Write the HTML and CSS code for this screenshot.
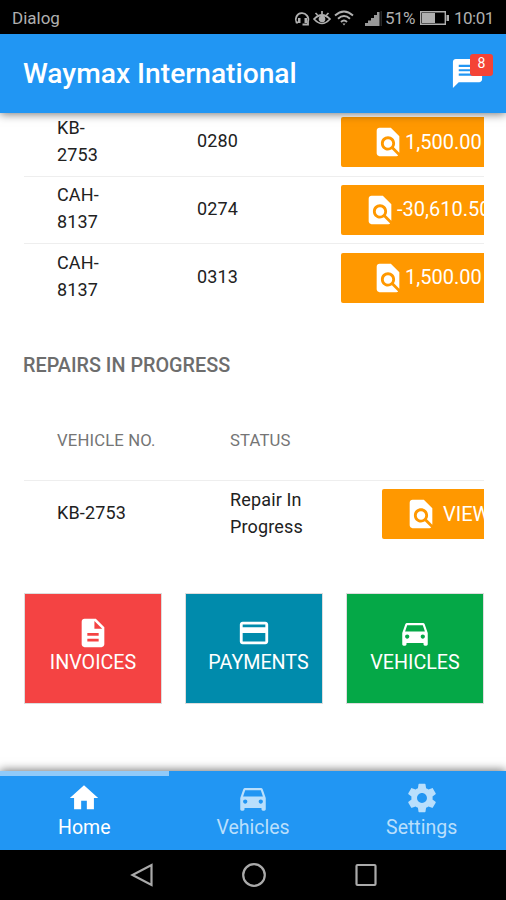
FILE: index.html
```html
<!DOCTYPE html>
<html lang="en">
<head>
<meta charset="utf-8">
<title>Waymax International</title>
<link rel="stylesheet" href="styles.css">
</head>
<body>
<svg class="defs" width="0" height="0">
  <symbol id="find" viewBox="0 0 24 24"><path d="M20 19.59V8l-6-6H6c-1.100 0-1.990.9-1.990 2L4 20c0 1.100.89 2 1.990 2H18c.45 0 .85-.15 1.190-.4l-4.430-4.430c-.8.52-1.740.83-2.760.83-2.760 0-5-2.240-5-5s2.240-5 5-5 5 2.240 5 5c0 1.020-.31 1.960-.83 2.750L20 19.590zM9 13c0 1.660 1.340 3 3 3s3-1.340 3-3-1.340-3-3-3-3 1.340-3 3z"/></symbol>
  <symbol id="car" viewBox="0 0 24 24"><path d="M18.920 6.010C18.720 5.420 18.160 5 17.500 5h-11c-.66 0-1.210.42-1.420 1.010L3 12v8c0 .55.45 1 1 1h1c.55 0 1-.45 1-1v-1h12v1c0 .55.45 1 1 1h1c.55 0 1-.45 1-1v-8l-2.080-5.990zM6.500 16c-.83 0-1.500-.67-1.500-1.500S5.670 13 6.500 13s1.500.67 1.500 1.500S7.330 16 6.500 16zm11 0c-.83 0-1.500-.67-1.500-1.500s.67-1.500 1.500-1.500 1.500.67 1.500 1.500-.67 1.500-1.500 1.500zM5 11l1.500-4.500h11L19 11H5z"/></symbol>
</svg>
<div class="phone">
  <div class="status">
    <span class="carrier">Dialog</span>
    <div class="indicators">
      <svg class="headset" width="18" height="16" viewBox="0 0 18 16"><path d="M5 12.500H3.500A6.300 6.300 0 1 1 15 11.500V14.500H9.500" fill="none" stroke="currentColor" stroke-width="1.800"/><path d="M5 8h2.500v5H5zM11.500 8H14v5h-2.500z" fill="currentColor"/></svg>
      <svg class="eye" width="18" height="16" viewBox="0 0 18 16" fill="none" stroke="currentColor" stroke-width="1.700"><path d="M1 9q8-8 16 0-8 9-16 0zM2.500 3l2 2M9 1v3M15.500 3l-2 2"/><circle cx="9" cy="9" r="2.500" fill="currentColor"/></svg>
      <svg class="wifi" width="20" height="16" viewBox="0 0 20 16" fill="none" stroke="currentColor" stroke-width="1.900"><path d="M1 5.500q9-8 18 0M4 8.800q6-5.500 12 0M7 12q3-3 6 0"/><path d="M8.500 13.500h3L10 15.500z" fill="currentColor" stroke="none"/></svg>
      <svg class="signal" width="17" height="15" viewBox="0 0 17 15"><path d="M0 15v-3h3V9.500h3V7h3V4h3V1h2.500v14z" fill="#999"/><path d="M15.500 0H17v15h-1.500z" fill="#292929"/></svg>
      <span class="percent">51%</span>
      <svg class="battery" width="29" height="14" viewBox="0 0 29 14"><path d="M.7.700h24.600v12.600H.7z" fill="none" stroke="currentColor" stroke-width="1.400"/><path d="M2 2h13v10H2zM26.500 4H29v6h-2.500z" fill="currentColor"/></svg>
      <span class="clock">10:01</span>
    </div>
  </div>
  <header class="header">
    <h1>Waymax International</h1>
    <div class="messages">
      <svg width="35" height="35" viewBox="0 0 24 24" fill="#fff"><path d="M20 2H4c-1.100 0-1.990.9-1.990 2L2 22l4-4h14c1.100 0 2-.9 2-2V4c0-1.100-.9-2-2-2z"/><path d="M6 6h12v1.500H6zM6 9h12v1.500H6zM6 12h12v1.500H6z" fill="#2196f3"/></svg>
      <span class="badge">8</span>
    </div>
  </header>
  <main class="content">
    <div class="invoices">
      <div class="row"><span>KB-<br>2753</span><span>0280</span><div class="button"><svg class="icon"><use href="#find"/></svg>1,500.00</div></div>
      <div class="row"><span>CAH-<br>8137</span><span>0274</span><div class="button wide"><svg class="icon"><use href="#find"/></svg>-30,610.50</div></div>
      <div class="row"><span>CAH-<br>8137</span><span>0313</span><div class="button"><svg class="icon"><use href="#find"/></svg>1,500.00</div></div>
    </div>
    <h2>REPAIRS IN PROGRESS</h2>
    <div class="repairs">
      <div class="row head"><span>VEHICLE NO.</span><span>STATUS</span></div>
      <div class="row"><span>KB-2753</span><span>Repair In<br>Progress</span><div class="button view"><svg class="icon"><use href="#find"/></svg>VIEW</div></div>
    </div>
    <div class="tiles">
      <div class="tile red"><svg class="icon" viewBox="0 0 24 24"><path d="M14 2H6c-1.100 0-1.990.9-1.990 2L4 20c0 1.100.89 2 1.990 2H18c1.100 0 2-.9 2-2V8l-6-6zm2 16H8v-2h8v2zm0-4H8v-2h8v2zm-3-5V3.500L18.500 9H13z"/></svg><span>INVOICES</span></div>
      <div class="tile teal"><svg class="icon" viewBox="0 0 24 24"><path d="M20 4H4c-1.110 0-1.990.89-1.990 2L2 18c0 1.110.89 2 2 2h16c1.110 0 2-.89 2-2V6c0-1.110-.89-2-2-2zm0 14H4v-6h16v6zm0-10H4V6h16v2z"/></svg><span>PAYMENTS</span></div>
      <div class="tile green"><svg class="icon"><use href="#car"/></svg><span>VEHICLES</span></div>
    </div>
  </main>
  <nav class="tabs">
    <div class="tab active"><svg class="icon" viewBox="0 0 24 24"><path d="M10 20v-6h4v6h5v-8h3L12 3 2 12h3v8z"/></svg><span>Home</span></div>
    <div class="tab"><svg class="icon"><use href="#car"/></svg><span>Vehicles</span></div>
    <div class="tab"><svg class="icon" viewBox="0 0 24 24"><path d="M19.430 12.980c.04-.32.07-.64.07-.98s-.03-.66-.07-.98l2.110-1.650c.19-.15.24-.42.12-.64l-2-3.460c-.12-.22-.39-.3-.61-.22l-2.490 1c-.52-.4-1.080-.73-1.690-.98l-.38-2.650C14.460 2.180 14.250 2 14 2h-4c-.25 0-.46.18-.49.42l-.38 2.650c-.61.25-1.170.59-1.690.98l-2.490-1c-.23-.09-.49 0-.61.22l-2 3.460c-.13.22-.07.49.12.64l2.110 1.650c-.04.32-.07.65-.07.98s.03.66.07.98l-2.110 1.650c-.19.15-.24.42-.12.64l2 3.460c.12.22.39.3.61.22l2.490-1c.52.4 1.080.73 1.690.98l.38 2.650c.03.24.24.42.49.42h4c.25 0 .46-.18.49-.42l.38-2.650c.61-.25 1.170-.59 1.690-.98l2.490 1c.23.09.49 0 .61-.22l2-3.460c.12-.22.07-.49-.12-.64l-2.110-1.650zM12 15.500c-1.930 0-3.500-1.570-3.500-3.500s1.570-3.500 3.500-3.500 3.500 1.570 3.500 3.500-1.570 3.500-3.500 3.500z"/></svg><span>Settings</span></div>
  </nav>
  <div class="system">
    <svg width="24" height="26" viewBox="0 0 24 26"><path d="M21.500 3v20L2.500 13z"/></svg>
    <svg width="26" height="26" viewBox="0 0 26 26"><circle cx="13" cy="13" r="10.800"/></svg>
    <svg width="24" height="26" viewBox="0 0 24 26"><rect x="2.500" y="3" width="19" height="20" rx="1"/></svg>
  </div>
</div>
</body>
</html>
```

FILE: styles.css
```css
* { box-sizing: border-box; }
body { margin: 0; background: #fff; font-family: Roboto, sans-serif; }
.defs { display: block; }
.phone { width: 506px; height: 900px; display: flex; flex-direction: column; overflow: hidden; }
.phone svg { display: block; flex: none; }
.icon { width: 34px; height: 34px; fill: currentColor; }

.status { flex: none; height: 34px; background: #000; color: #b0b0b0; display: flex; justify-content: space-between; align-items: center; padding: 2px 12px 0 12px; font-size: 17px; }
.carrier { letter-spacing: 0; }
.indicators { display: flex; align-items: center; }
.eye { margin-left: 2px; }
.wifi { margin-left: 3px; }
.signal { margin-left: 11px; }
.percent { margin-left: 3px; width: 30px; letter-spacing: -.5px; }
.battery { margin-left: 5px; }
.clock { margin-left: 5px; width: 40px; letter-spacing: -.5px; }

.header { flex: none; height: 79px; background: #2196f3; color: #fff; display: flex; justify-content: space-between; align-items: center; padding: 0 18px 0 23px; box-shadow: 0 1px 9px rgba(0,0,0,.55); position: relative; z-index: 1; }
h1 { margin: 0; font-size: 28.200px; font-weight: 500; }
.messages { position: relative; width: 38px; height: 35px; }
.badge { position: absolute; left: 20px; top: -2px; width: 23px; height: 22px; border-radius: 3px; background: #f44336; font-size: 14px; line-height: 19px; text-align: center; }

.content { flex: 1; min-height: 0; overflow: hidden; padding: 0 22px 0 24px; font-size: 18px; color: #212121; }
.invoices { margin-top: -4px; }
.row { display: grid; align-items: center; line-height: 27px; overflow: hidden; }
.invoices .row { grid-template-columns: 140px 144px 1fr; height: 67.500px; padding-left: 33px; border-bottom: 1px solid #eee; }
.invoices .row:last-child { border-bottom: 0; }
.row span { letter-spacing: .15px; margin-bottom: 3px; }
.button { height: 50px; background: #ff9800; color: #fff; border-radius: 2px 0 0 2px; display: flex; align-items: center; padding-left: 30px; font-size: 20px; white-space: nowrap; overflow: hidden; }
.button.wide { padding-left: 22px; }
h2 { margin: 40px 0 0 -1px; font-size: 19.800px; line-height: 28px; font-weight: 500; color: #6d6d6d; }
.repairs .row { grid-template-columns: 173px 152px 1fr; padding-left: 33px; height: 67px; }
.repairs .row.head { height: 79px; margin-top: 22px; font-size: 16.700px; color: #757575; border-bottom: 1px solid #eee; }
.repairs .row.head span { margin-bottom: 0; }
.button.view { padding-left: 22px; gap: 5px; }
.tiles { display: grid; grid-template-columns: repeat(3, 138px); justify-content: space-between; margin-top: 45px; }
.tile { height: 111px; border: 1px solid #ddd; color: #fff; font-size: 19.700px; line-height: 24px; display: flex; flex-direction: column; align-items: center; padding-top: 22px; }
.tile span { margin-top: 1px; }
.red { background: #f44343; }
.teal { background: #008bac; }
.teal span { padding-left: 9px; }
.green { background: #05a847; }

.tabs { flex: none; height: 79px; background: #2196f3; display: grid; grid-template-columns: repeat(3, 1fr); box-shadow: 0 -1px 9px rgba(0,0,0,.55); position: relative; }
.tab { border-top: 5px solid transparent; color: #b9dffc; font-size: 19.500px; line-height: 24px; display: flex; flex-direction: column; align-items: center; padding-top: 5px; }
.tab span { margin-top: 1px; }
.tab.active { color: #fff; border-color: #90caf9; }
.system { flex: none; height: 50px; background: #000; display: flex; justify-content: center; align-items: center; gap: 87px; padding-left: 1px; position: relative; fill: none; stroke: #aaa; stroke-width: 2.200; }
```
